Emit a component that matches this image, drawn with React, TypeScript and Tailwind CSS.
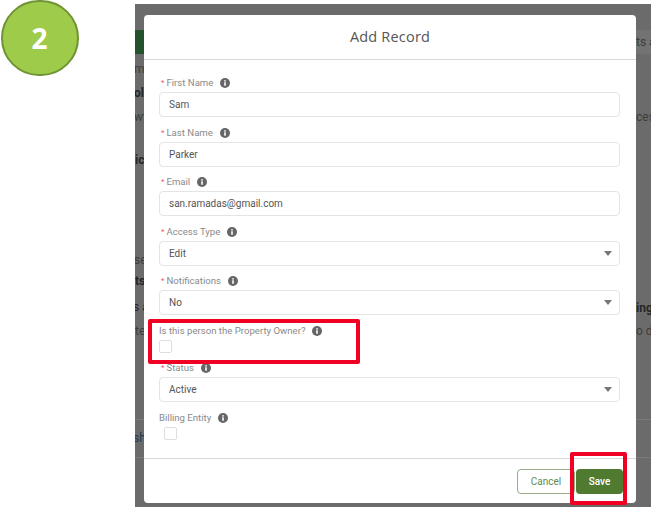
import React from "react";

function InfoIcon() {
  return (
    <svg width="10" height="10" viewBox="0 0 10 10" className="shrink-0">
      <circle cx="5" cy="5" r="5" fill="#666666" />
      <rect x="4.2" y="4.3" width="1.6" height="3.4" fill="#fff" />
      <rect x="4.2" y="2.2" width="1.6" height="1.4" fill="#fff" />
    </svg>
  );
}

function Label({ text, required }: { text: string; required?: boolean }) {
  return (
    <div className="flex items-center h-[12px] text-[9.6px] leading-[12px] text-[#8a8a8a]">
      {required && <span className="text-[#ee5a70] ml-[2px] mr-[2px] text-[8px]">*</span>}
      <span>{text}</span>
      <span className="ml-[7px]">
        <InfoIcon />
      </span>
    </div>
  );
}

function Field({ label, value, select }: { label: string; value: string; select?: boolean }) {
  return (
    <div className="flex flex-col gap-[3px] h-[49.6px]">
      <Label text={label} required />
      <div className="flex items-center justify-between h-[25px] border border-[#e4e4e4] rounded-[4px] pl-[9px] pr-[7px] text-[10px] text-[#555555]">
        <span>{value}</span>
        {select && <span className="w-0 h-0 border-x-[4px] border-x-transparent border-t-[5px] border-t-[#777777]" />}
      </div>
    </div>
  );
}

function CheckField({ label, indent }: { label: string; indent: string }) {
  return (
    <div className="flex flex-col gap-[3px]">
      <Label text={label} />
      <div className={`w-[13px] h-[13px] border border-[#dedede] rounded-[2px] ${indent}`} />
    </div>
  );
}

function BackdropText({ className, children }: { className: string; children: string }) {
  return <span className={`absolute text-[12px] leading-[12px] whitespace-nowrap ${className}`}>{children}</span>;
}

export default function App() {
  return (
    <div className="relative flex w-[659px] h-[513px] bg-white overflow-hidden font-['Roboto',sans-serif]">
      <div className="w-[135px] shrink-0 pl-px">
        <div className="flex items-center justify-center w-[78px] h-[76px] rounded-full bg-[#9fcb4b] border-[2.5px] border-[#6f9433] text-white text-[28px] font-bold font-['Open_Sans',sans-serif] pr-px">
          2
        </div>
      </div>

      <div className="relative mt-1 w-[516px] h-[503px] bg-[#6b6b6b] overflow-hidden">
        {/* page behind the dialog */}
        <div className="absolute left-0 top-[26px] w-[9px] h-[24px] bg-[#23532c]" />
        <div className="absolute right-0 top-[26px] w-[15px] h-[24px] bg-[#737373]" />
        <div className="absolute left-0 right-0 top-[415px] h-px bg-[#7a7a7a]" />
        <div className="absolute left-0 right-0 top-[453px] h-px bg-[#7a7a7a]" />
        <BackdropText className="-left-[1px] top-[59px] text-[#3d3d3d]">mu</BackdropText>
        <BackdropText className="-left-[1px] top-[83px] font-bold text-[#262626]">oli</BackdropText>
        <BackdropText className="-left-[1px] top-[107px] text-[#3d3d3d]">wt</BackdropText>
        <BackdropText className="left-0 top-[150px] font-bold text-[#262626]">ic</BackdropText>
        <BackdropText className="-left-[1px] top-[250px] text-[#3d3d3d]">se</BackdropText>
        <BackdropText className="left-0 top-[271px] font-bold text-[#262626]">ts</BackdropText>
        <BackdropText className="-left-[2px] top-[297px] text-[#262626]">s a</BackdropText>
        <BackdropText className="left-0 top-[321px] text-[#3d3d3d]">te</BackdropText>
        <BackdropText className="-left-[2px] top-[428px] text-[#1d3a52]">sh</BackdropText>
        <BackdropText className="left-[501px] top-[32px] text-[#3d3d3d]">ts a</BackdropText>
        <BackdropText className="left-[501px] top-[107px] text-[#3d3d3d]">ces</BackdropText>
        <BackdropText className="left-[501px] top-[298px] font-bold text-[#262626]">ing</BackdropText>
        <BackdropText className="left-[501px] top-[321px] text-[#3d3d3d]">o do</BackdropText>

        {/* dialog */}
        <div className="absolute left-[9px] top-[11px] w-[492px] h-[488px] bg-white rounded-[4px] flex flex-col">
          <div className="flex items-center justify-center h-[45px] border-b border-[#d9d9d9] text-[14.5px] tracking-[0.2px] text-[#555555] font-['Open_Sans',sans-serif] shrink-0">
            Add Record
          </div>
          <div className="flex flex-col flex-1 pl-[15px] pr-[16px] pt-[17px]">
            <Field label="First Name" value="Sam" />
            <Field label="Last Name" value="Parker" />
            <Field label="Email" value="san.ramadas@gmail.com" />
            <Field label="Access Type" value="Edit" select />
            <Field label="Notifications" value="No" select />
            <div className="h-[37px]">
              <CheckField label="Is this person the Property Owner?" indent="" />
            </div>
            <Field label="Status" value="Active" select />
            <CheckField label="Billing Entity" indent="ml-[5px]" />
          </div>
          <div className="flex justify-end items-start gap-px h-[45px] border-t border-[#d9d9d9] pt-[10px] pr-[13px] shrink-0">
            <button className="w-[58px] h-[25px] border border-[#98ae85] rounded-[4px] text-[10px] text-[#5f8a4a]">Cancel</button>
            <button className="w-[47px] h-[25px] rounded-[4px] bg-[#4f7a2f] text-[10px] font-medium text-white">Save</button>
          </div>
        </div>
      </div>

      {/* highlight boxes */}
      <div className="absolute left-[148px] top-[319px] w-[212px] h-[45px] border-[4px] border-[#f00022] rounded-[2px]" />
      <div className="absolute left-[570px] top-[452px] w-[57px] h-[53px] border-[4px] border-[#f00022] rounded-[2px]" />
    </div>
  );
}
